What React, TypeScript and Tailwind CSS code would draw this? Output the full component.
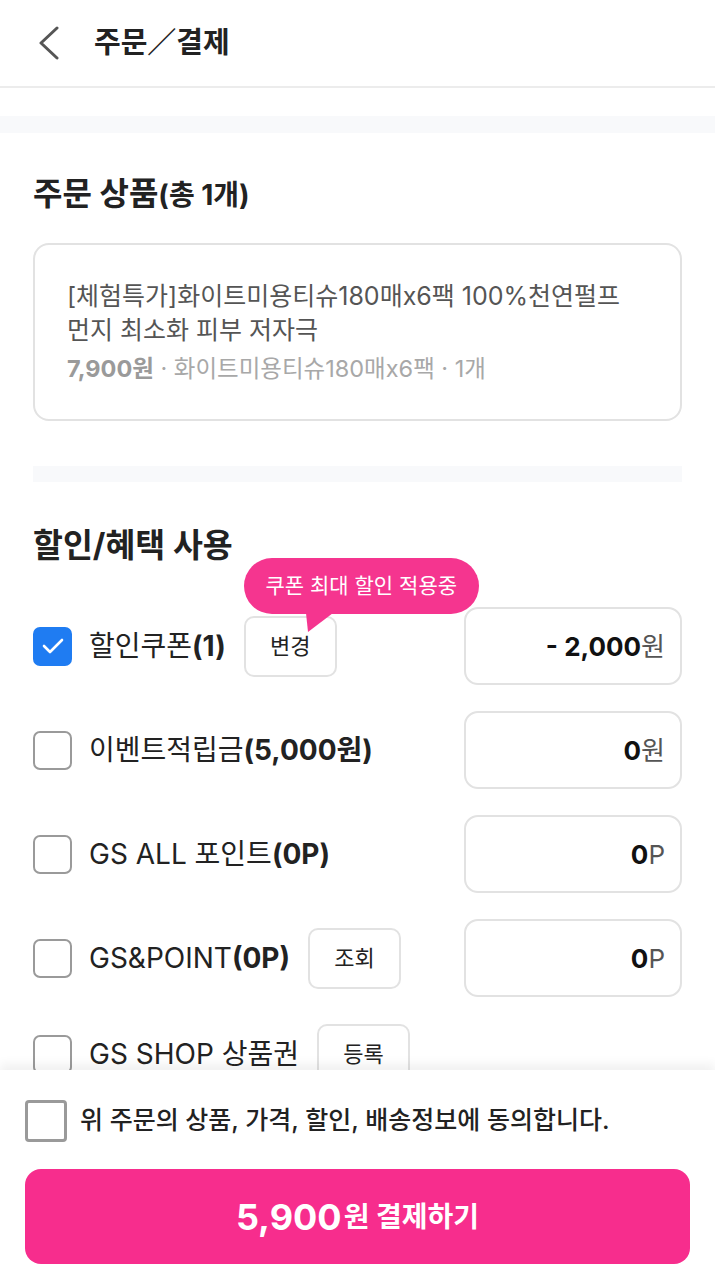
import React from "react";

interface Benefit {
  label: string;
  bold: string;
  checked: boolean;
  button?: string;
  amount?: string;
  unit?: string;
}

const benefits: Benefit[] = [
  { label: "할인쿠폰", bold: "(1)", checked: true, button: "변경", amount: "- 2,000", unit: "원" },
  { label: "이벤트적립금", bold: "(5,000원)", checked: false, amount: "0", unit: "원" },
  { label: "GS ALL 포인트", bold: "(0P)", checked: false, amount: "0", unit: "P" },
  { label: "GS&POINT", bold: "(0P)", checked: false, button: "조회", amount: "0", unit: "P" },
  { label: "GS SHOP 상품권", bold: "", checked: false, button: "등록" }
];

const CheckBox = ({ checked }: { checked: boolean }) =>
  checked ? (
    <span className="flex h-[39px] w-[39px] shrink-0 items-center justify-center rounded-[7px] bg-[#1f7cf2]">
      <svg width="22" height="16" viewBox="0 0 22 16" fill="none">
        <path d="M2 8l6 6L20 2" stroke="white" strokeWidth="2.6" strokeLinecap="round" strokeLinejoin="round" />
      </svg>
    </span>
  ) : (
    <span className="h-[39px] w-[39px] shrink-0 rounded-[7px] border-2 border-[#9a9a9a] bg-white" />
  );

const BenefitRow = ({ item, first }: { item: Benefit; first: boolean }) => (
  <div className="relative flex items-center">
    <CheckBox checked={item.checked} />
    <span className="ml-[17px] text-[28px] text-[#222] whitespace-nowrap">
      {item.label}
      <span className="font-bold">{item.bold}</span>
    </span>
    {item.button && (
      <span className="relative ml-[18px] flex h-[61px] w-[93px] shrink-0 items-center justify-center rounded-[10px] border-2 border-[#e2e2e2] text-[22px] text-[#222]">
        {item.button}
        {first && (
          <span className="absolute bottom-[43px] left-[-2px] flex flex-col items-start">
            <span className="flex h-[56px] w-[235px] items-center justify-center rounded-full bg-[#f5358f] text-[21px] text-white">
              쿠폰 최대 할인 적용중
            </span>
            <svg width="28" height="19" viewBox="0 0 28 19" className="ml-[62px] -mt-px">
              <polygon points="0,0 27,0 2,19" fill="#f5358f" />
            </svg>
          </span>
        )}
      </span>
    )}
    {item.amount !== undefined ? (
      <div className="ml-auto flex h-[78px] w-[218px] shrink-0 items-center justify-end rounded-[14px] border-2 border-[#e2e2e2] pr-[15px] text-[26px]">
        <span className="font-bold text-[#111]">{item.amount}</span>
        <span className="text-[#555]">{item.unit}</span>
      </div>
    ) : (
      <div className="h-[62px]" />
    )}
  </div>
);

export default function App() {
  return (
    <div className="flex h-[1280px] w-full flex-col overflow-hidden bg-white font-['Inter','Noto_Sans_CJK_KR',sans-serif] text-[#222]">
      {/* header */}
      <header className="flex h-[88px] shrink-0 items-center border-b-2 border-[#ececec] px-[38px]">
        <svg width="22" height="34" viewBox="0 0 22 34" fill="none">
          <path d="M19 2L3 17l16 15" stroke="#555" strokeWidth="3" strokeLinecap="round" strokeLinejoin="round" />
        </svg>
        <h1 className="ml-[34px] text-[29px] font-semibold">주문／결제</h1>
      </header>

      <main className="flex-1 overflow-hidden">
        <div className="mt-[28px] h-[17px] bg-[#f8f9fb]" />

        <section className="px-[33px]">
          <h2 className="mt-[40px] text-[32px] font-bold leading-[42px]">
            주문 상품<span className="text-[28px]">(총 1개)</span>
          </h2>
          <div className="mt-[27px] rounded-[16px] border-2 border-[#e2e2e2] px-[32px] pt-[34px] pb-[33px]">
            <p className="text-[25px] leading-[34px] text-[#555]">
              [체험특가]화이트미용티슈180매x6팩 100%천연펄프
              <br />
              먼지 최소화 피부 저자극
            </p>
            <p className="mt-[5px] text-[23.5px] leading-[34px] text-[#a8a8a8]">
              <span className="font-bold text-[#9a9a9a]">7,900원</span> · 화이트미용티슈180매x6팩 · 1개
            </p>
          </div>

          <div className="mt-[45px] h-[16px] bg-[#f8f9fb]" />

          <h2 className="mt-[41px] text-[32.5px] font-bold leading-[45px]">할인/혜택 사용</h2>

          <div className="mt-[39px] flex flex-col gap-[26px]">
            {benefits.map((item, i) => (
              <BenefitRow key={item.label} item={item} first={i === 0} />
            ))}
          </div>
        </section>
      </main>

      {/* bottom bar */}
      <footer className="relative shrink-0 bg-white px-[25px] pt-[30px] pb-[16px] shadow-[0_-6px_10px_rgba(0,0,0,0.06)]">
        <label className="flex items-center">
          <span className="h-[42px] w-[42px] shrink-0 rounded-[4px] border-[3px] border-[#9a9a9a]" />
          <span className="ml-[13px] text-[25px] font-medium">위 주문의 상품, 가격, 할인, 배송정보에 동의합니다.</span>
        </label>
        <button className="mt-[27px] flex h-[95px] w-full items-center justify-center rounded-[16px] bg-[#f72d8d] font-bold text-white">
          <span className="text-[36px]">5,900</span>
          <span className="ml-[2px] text-[28px]">원 결제하기</span>
        </button>
      </footer>
    </div>
  );
}
